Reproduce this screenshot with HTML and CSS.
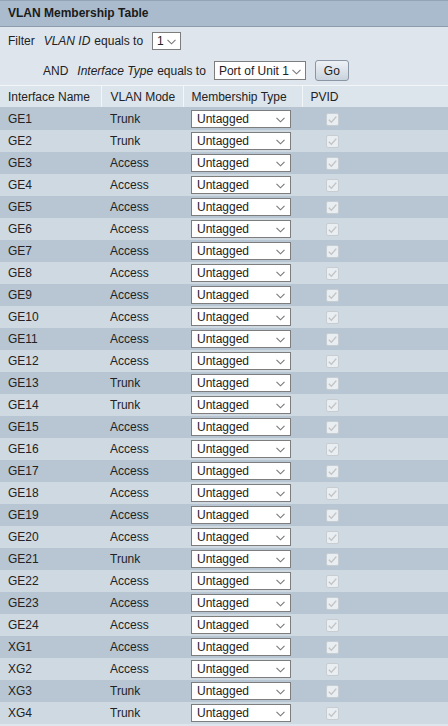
FILE: index.html
```html
<!DOCTYPE html>
<html>
<head>
<meta charset="utf-8">
<link rel="stylesheet" href="styles.css">
</head>
<body>
<div class="panel">
  <div class="title">VLAN Membership Table</div>
  <div class="filter">
    <div class="frow">
      <span>Filter</span>
      <span class="it">VLAN ID</span><span>equals to</span>
      <span class="sel sel-id"><span>1</span><svg class="chev" viewBox="0 0 9 6" width="9" height="6"><path d="M0.5 0.8 L4.5 4.8 L8.5 0.8" fill="none" stroke="#777" stroke-width="1.1"/></svg></span>
    </div>
    <div class="frow frow2">
      <span>AND</span>
      <span class="it">Interface Type</span><span>equals to</span>
      <span class="sel sel-port"><span>Port of Unit 1</span><svg class="chev" viewBox="0 0 9 6" width="9" height="6"><path d="M0.5 0.8 L4.5 4.8 L8.5 0.8" fill="none" stroke="#777" stroke-width="1.1"/></svg></span>
      <button class="go">Go</button>
    </div>
  </div>
  <table class="grid">
    <thead>
      <tr><th class="c1">Interface Name</th><th class="c2">VLAN Mode</th><th class="c3">Membership Type</th><th class="c4">PVID</th></tr>
    </thead>
    <tbody id="rows"></tbody>
  </table>
</div>
<script src="app.js"></script>
</body>
</html>
```
FILE: app.js
```js
var data = [
["GE1","Trunk"],["GE2","Trunk"],["GE3","Access"],["GE4","Access"],["GE5","Access"],["GE6","Access"],["GE7","Access"],["GE8","Access"],["GE9","Access"],["GE10","Access"],["GE11","Access"],["GE12","Access"],["GE13","Trunk"],["GE14","Trunk"],["GE15","Access"],["GE16","Access"],["GE17","Access"],["GE18","Access"],["GE19","Access"],["GE20","Access"],["GE21","Trunk"],["GE22","Access"],["GE23","Access"],["GE24","Access"],["XG1","Access"],["XG2","Access"],["XG3","Trunk"],["XG4","Trunk"]
];
var html = "";
var chev = '<svg class="chev" viewBox="0 0 9 6" width="9" height="6"><path d="M0.5 0.8 L4.5 4.8 L8.5 0.8" fill="none" stroke="#777" stroke-width="1.1"/></svg>';
var chk = '<span class="cb"><svg viewBox="0 0 13 13" width="13" height="13"><path d="M2.8 6.8 L5.4 9.3 L10.3 3.6" fill="none" stroke="#c4c4c4" stroke-width="1.4"/></svg></span>';
for (var i = 0; i < data.length; i++) {
  html += '<tr class="' + (i % 2 ? 'even' : 'odd') + '"><td class="c1">' + data[i][0] + '</td><td class="c2">' + data[i][1] + '</td><td class="c3"><span class="sel sel-mt"><span>Untagged</span>' + chev + '</span></td><td class="c4">' + chk + '</td></tr>';
}
document.getElementById("rows").innerHTML = html;
```
FILE: styles.css
```css
* { box-sizing: border-box; }
html, body { margin: 0; padding: 0; }
body {
  width: 448px;
  height: 726px;
  overflow: hidden;
  font-family: "Liberation Sans", Arial, sans-serif;
  font-size: 12px;
  color: #222;
  background: #dee5ed;
}
.title {
  height: 27px;
  background: #a9bbcc;
  border-top: 1px solid #93a4b5;
  border-bottom: 1px solid #8c9cac;
  font-weight: bold;
  padding-left: 8px;
  line-height: 25px;
  color: #1a1a1a;
}
.filter {
  background: #dee5ed;
  padding: 5px 0 0 8px;
  height: 58px;
}
.frow {
  display: flex;
  align-items: center;
  height: 18px;
  gap: 4px;
}
.frow .it { font-style: italic; margin-left: 5px; }
.frow2 {
  margin-top: 10px;
  padding-left: 35px;
  height: 21px;
}
.sel {
  position: relative;
  display: inline-flex;
  align-items: center;
  background: #fff;
  border: 1px solid #7d7d7d;
  height: 18px;
  padding-left: 4px;
  color: #222;
}
.chev { position: absolute; top: 6px; }
.sel-id { width: 29px; margin-left: 5px; }
.sel-id .chev { right: 4px; }
.sel-port { width: 92px; height: 19px; margin-left: 4px; }
.sel-port .chev { right: 4px; top: 7px; }
.go {
  margin-left: 5px;
  width: 34px;
  height: 21px;
  border: 1px solid #8a96a3;
  border-radius: 3px;
  background: linear-gradient(#eef2f6, #c9d3dd);
  font-family: "Liberation Sans", Arial, sans-serif;
  font-size: 12px;
  color: #222;
  padding: 0;
}
.grid {
  border-collapse: collapse;
  width: 448px;
  table-layout: fixed;
}
.grid th {
  background: #dce4ec;
  font-weight: normal;
  text-align: left;
  height: 22px;
  border-top: 1px solid #f3f6f8;
  border-bottom: 1px solid #b9c5d0;
  border-left: 1px solid #f3f6f8;
  padding: 0 0 0 8px;
}
.grid th.c1 { border-left: none; }
.c1 { width: 101px; }
.c2 { width: 82px; }
.c3 { width: 119px; }
.grid td {
  height: 22px;
  padding: 0 0 0 8px;
}
.grid td.c2, .grid th.c2 { padding-left: 9px; }
.grid tr.odd td { background: #b8c6d3; }
.grid tr.even td { background: #cfd9e2; }
.sel-mt { width: 100px; height: 18px; padding-left: 5px; vertical-align: middle; }
.sel-mt .chev { right: 5px; top: 6px; }
.grid td.c4 { padding-left: 24px; }
.cb {
  display: inline-block;
  width: 13px;
  height: 13px;
  border: 1px solid #c8cdd2;
  background: #e9eef2;
  border-radius: 2px;
  vertical-align: middle;
  position: relative;
}
.cb svg { position: absolute; left: -1px; top: -1px; }
```
